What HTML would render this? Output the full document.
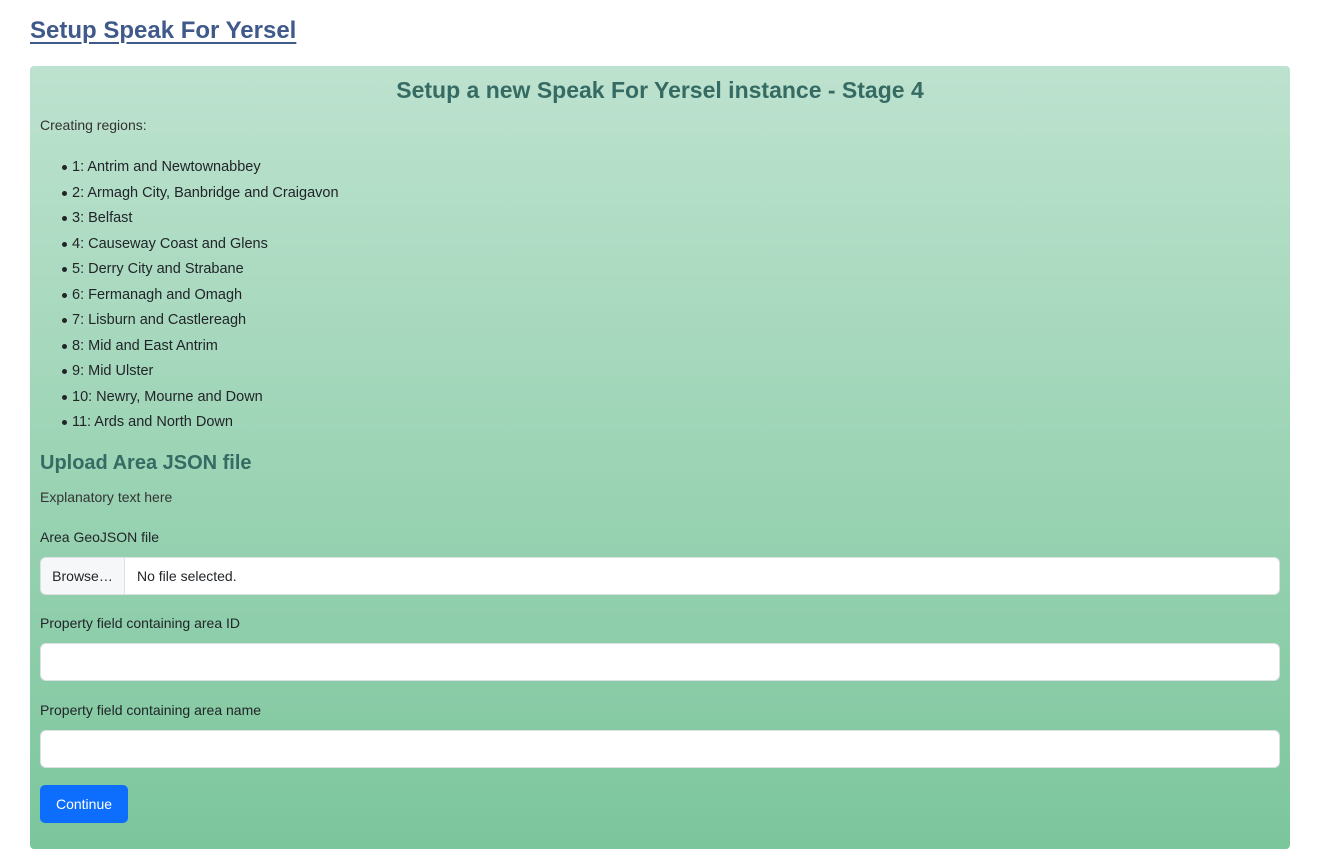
<!DOCTYPE html>
<html><head><meta charset="utf-8"><style>
*{box-sizing:border-box;margin:0;padding:0}
body{width:1320px;height:868px;background:#fff;font-family:"Liberation Sans",sans-serif;color:#212529;position:relative;overflow:hidden}
.a{position:absolute;white-space:nowrap}
h1{position:absolute;left:30px;top:17px;font-size:24px;font-weight:bold;color:#3f5a8a;text-decoration:underline;text-decoration-thickness:2px;text-underline-offset:4px}
.panel{position:absolute;left:30px;top:66px;width:1260px;height:783px;border-radius:4px;background:linear-gradient(#bde2cf,#7cc69c)}
.h{color:#356b62;font-weight:bold}
.t{font-size:14px;color:#333}
ul{position:absolute;left:72px;top:157px;list-style:none}
li{font-size:14.5px;height:25.5px;line-height:20px;position:relative}
li:before{content:"";position:absolute;left:-10px;top:8px;width:5px;height:5px;border-radius:50%;background:#212529}
.inp{position:absolute;left:40px;width:1240px;height:38px;background:#fff;border:1px solid #dde0e3;border-radius:6px}
</style></head><body>
<h1>Setup Speak For Yersel</h1>
<div class="panel"></div>
<div class="a h" style="left:0;width:1320px;text-align:center;top:77px;font-size:23px">Setup a new Speak For Yersel instance - Stage 4</div>
<div class="a t" style="left:40px;top:117px">Creating regions:</div>
<ul>
<li>1: Antrim and Newtownabbey</li>
<li>2: Armagh City, Banbridge and Craigavon</li>
<li>3: Belfast</li>
<li>4: Causeway Coast and Glens</li>
<li>5: Derry City and Strabane</li>
<li>6: Fermanagh and Omagh</li>
<li>7: Lisburn and Castlereagh</li>
<li>8: Mid and East Antrim</li>
<li>9: Mid Ulster</li>
<li>10: Newry, Mourne and Down</li>
<li>11: Ards and North Down</li>
</ul>
<div class="a h" style="left:40px;top:452px;font-size:20px">Upload Area JSON file</div>
<div class="a t" style="left:40px;top:489px">Explanatory text here</div>
<div class="a" style="left:40px;top:529px;font-size:14px">Area GeoJSON file</div>
<div class="inp" style="top:557px"><div class="a" style="left:0;top:0;width:84px;height:36px;background:#f6f7f8;border-right:1px solid #dde0e3;border-radius:6px 0 0 6px;font-size:14px;line-height:36px;text-align:center">Browse…</div><div class="a" style="left:96px;top:0;line-height:36px;font-size:14px">No file selected.</div></div>
<div class="a" style="left:40px;top:615px;font-size:14px">Property field containing area ID</div>
<div class="inp" style="top:643px"></div>
<div class="a" style="left:40px;top:702px;font-size:14px">Property field containing area name</div>
<div class="inp" style="top:730px"></div>
<div class="a" style="left:40px;top:785px;width:88px;height:38px;background:#0d6efd;color:#fff;border-radius:5px;font-size:14px;line-height:38px;text-align:center">Continue</div>
</body></html>
